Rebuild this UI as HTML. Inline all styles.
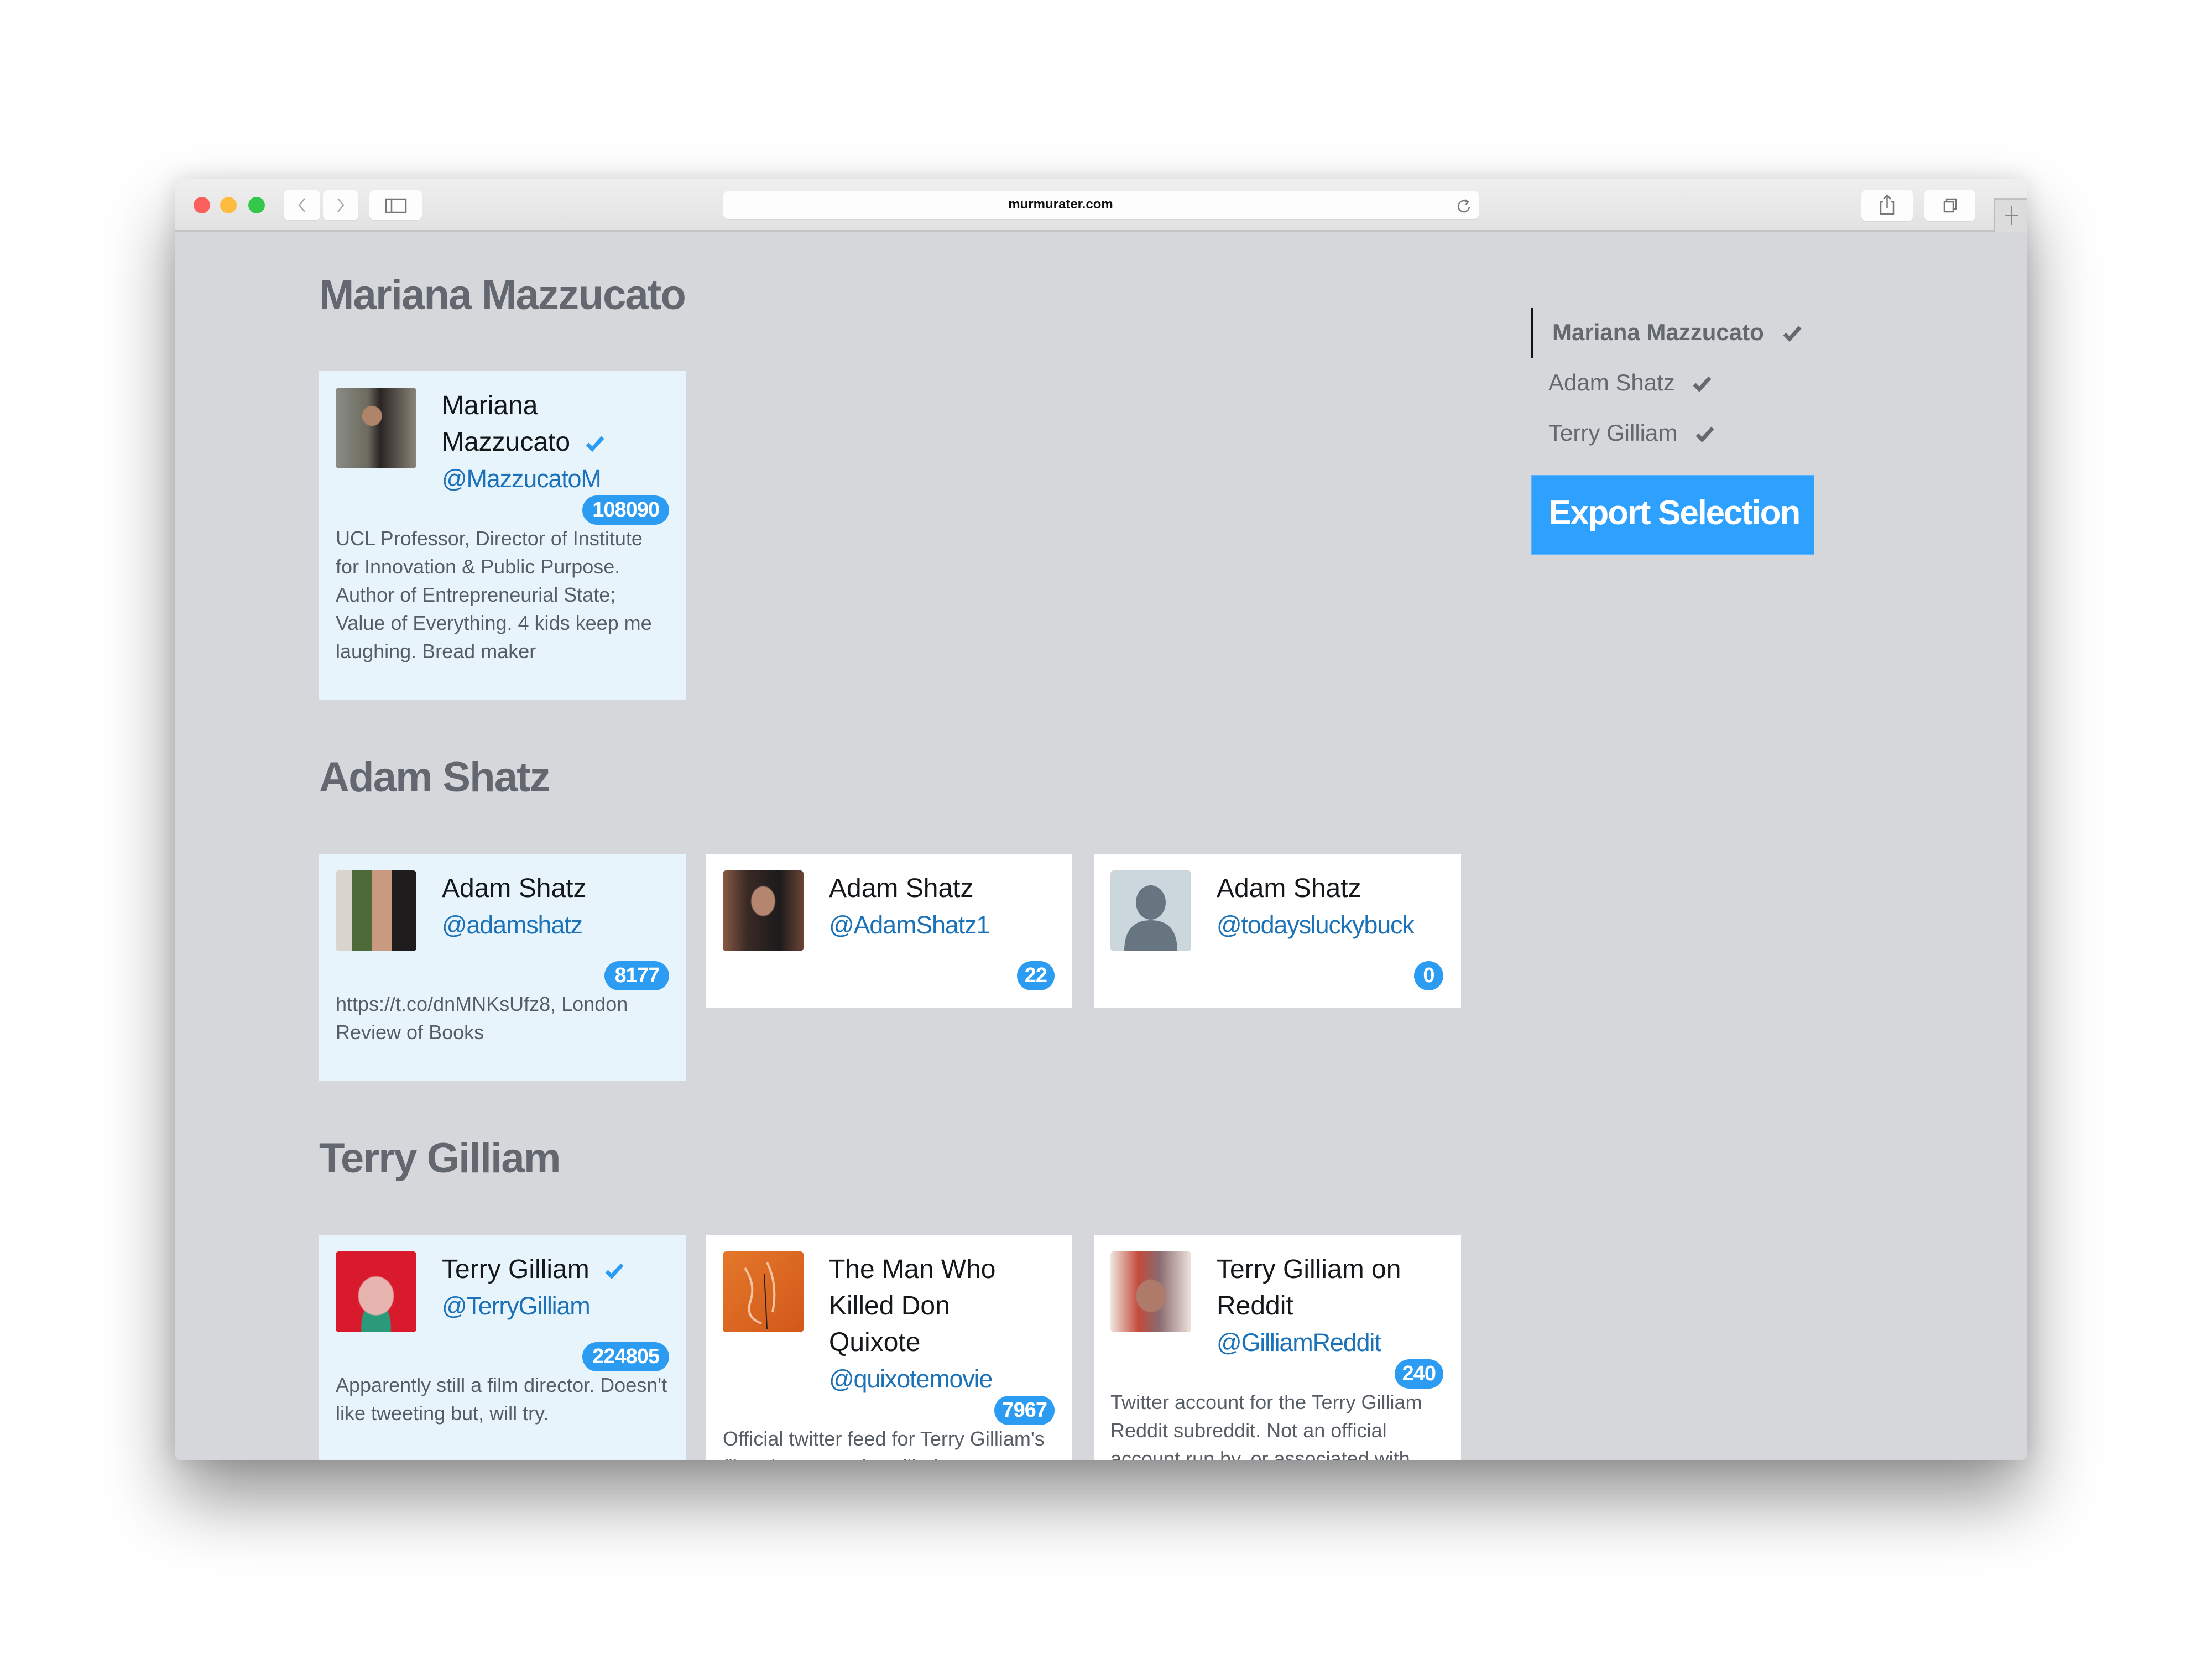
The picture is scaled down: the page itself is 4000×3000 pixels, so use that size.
<!DOCTYPE html>
<html><head><meta charset="utf-8"><style>
*{margin:0;padding:0;box-sizing:border-box}
body{width:4000px;height:3000px;background:#fff;position:relative;overflow:hidden;font-family:"Liberation Sans",Arial,sans-serif}
.win{position:absolute;left:316px;top:324px;width:3350px;height:2317px;border-radius:12px;overflow:hidden;box-shadow:0 70px 160px rgba(0,0,0,.42),0 0 40px rgba(0,0,0,.12);background:#d6d7db}
.tb{position:absolute;left:0;top:0;width:3350px;height:95px;background:linear-gradient(#efefef,#e2e2e2);border-bottom:3px solid #c4c4c4}
.dot{position:absolute;top:32px;width:30px;height:30px;border-radius:50%}
.btn{position:absolute;background:#fdfdfd;border-radius:9px;box-shadow:0 1px 1px rgba(0,0,0,.06)}
.abs{position:absolute}
h2{position:absolute;left:577px;font-size:76px;line-height:1;font-weight:bold;color:#636870;letter-spacing:-1.8px;white-space:nowrap}
.card{position:absolute;padding:30px;overflow:hidden}
.blue{background:#e8f4fc}.white{background:#fff}
.av{position:absolute;left:30px;top:30px;width:146px;height:146px;border-radius:6px;overflow:hidden}
.nm{position:absolute;left:222px;top:30px;font-size:48px;line-height:66px;color:#15181b;white-space:nowrap}
.nm .h{color:#1b72b8;font-size:45px;letter-spacing:-1.2px}
.badge{position:absolute;right:30px;height:53px;min-width:53px;padding:0 18px;border-radius:27px;background:#2b9cf2;color:#fff;font-weight:bold;font-size:38px;line-height:53px;text-align:center;letter-spacing:-1px}
.ds{position:absolute;left:30px;font-size:36px;line-height:51px;color:#575d64;white-space:nowrap}
.side{position:absolute;font-size:42px;color:#646970;white-space:nowrap;line-height:1}
</style></head><body>
<div class="win">
 <div class="tb">
  <div class="dot" style="left:34px;background:#fc605c"></div>
  <div class="dot" style="left:82px;background:#fdbc40"></div>
  <div class="dot" style="left:133px;background:#34c84a"></div>
  <div class="btn" style="left:197px;top:20px;width:66px;height:54px"><svg width="66" height="54"><path d="M38 15 L28 27 L38 39" stroke="#a8a8a8" stroke-width="2.5" fill="none"/></svg></div>
  <div class="btn" style="left:268px;top:20px;width:64px;height:54px"><svg width="64" height="54"><path d="M27 15 L37 27 L27 39" stroke="#a8a8a8" stroke-width="2.5" fill="none"/></svg></div>
  <div class="btn" style="left:352px;top:20px;width:95px;height:54px"><svg width="95" height="54"><rect x="30" y="16" width="36" height="24" stroke="#777" stroke-width="2.5" fill="none"/><line x1="40" y1="16" x2="40" y2="40" stroke="#777" stroke-width="2.5"/></svg></div>
  <div class="btn" style="left:992px;top:22px;width:1366px;height:50px;border-radius:8px">
   <div class="abs" style="left:0;width:1220px;text-align:center;top:10px;font-size:24px;font-weight:bold;color:#111">murmurater.com</div>
   <svg class="abs" style="left:1325px;top:12px" width="30" height="30"><path d="M20 7 A10 10 0 1 0 24 16" stroke="#777" stroke-width="2.5" fill="none"/><path d="M16 3 L22 7 L17 12" stroke="#777" stroke-width="2.5" fill="none"/></svg>
  </div>
  <div class="btn" style="left:3050px;top:19px;width:93px;height:57px"><svg width="93" height="57"><path d="M39 22 H35 V44 H58 V22 H54" stroke="#777" stroke-width="2.5" fill="none"/><path d="M46.5 10 V34 M40 17 L46.5 10 L53 17" stroke="#777" stroke-width="2.5" fill="none"/></svg></div>
  <div class="btn" style="left:3164px;top:19px;width:92px;height:57px"><svg width="92" height="57"><rect x="36" y="22" width="16" height="18" stroke="#777" stroke-width="2.5" fill="none"/><path d="M40 22 V17 H57 V35 H52" stroke="#777" stroke-width="2.5" fill="none"/></svg></div>
  <div class="abs" style="left:3290px;top:34px;width:60px;height:61px;background:#dcdcdc;border-left:2px solid #bbb;border-top:3px solid #c2c2c2"><svg width="60" height="61"><path d="M29 12 V46 M17 29 H41" stroke="#888" stroke-width="2"/></svg></div>
 </div>
</div>

<h2 style="top:496px">Mariana Mazzucato</h2>
<h2 style="top:1368px">Adam Shatz</h2>
<h2 style="top:2057px">Terry Gilliam</h2>

<div class="card blue" style="left:577px;top:671px;width:663px;height:594px">
 <div class="av" style="background:radial-gradient(circle at 45% 35%,#b08468 0 14%,transparent 15%),linear-gradient(90deg,#8a8c86,#6d6a5f 40%,#2a2524 55%,#8b8579)"></div>
 <div class="nm">Mariana<br>Mazzucato <svg width="36" height="30" style="margin-left:14px;vertical-align:-2px"><path d="M4 16 L13 25 L32 4" stroke="#2b9cf2" stroke-width="7" fill="none"/></svg><br><span class="h">@MazzucatoM</span></div>
 <div class="badge" style="top:225px">108090</div>
 <div class="ds" style="top:277px">UCL Professor, Director of Institute<br>for Innovation &amp; Public Purpose.<br>Author of Entrepreneurial State;<br>Value of Everything. 4 kids keep me<br>laughing. Bread maker</div>
</div>

<div class="card blue" style="left:577px;top:1544px;width:663px;height:411px">
 <div class="av" style="background:linear-gradient(90deg,#d9d4cc 0 20%,#4d6a3a 20% 45%,#c99a80 45% 70%,#1e1c1c 70%)"></div>
 <div class="nm">Adam Shatz<br><span class="h">@adamshatz</span></div>
 <div class="badge" style="top:194px">8177</div>
 <div class="ds" style="top:246px">https://t.co/dnMNKsUfz8, London<br>Review of Books</div>
</div>
<div class="card white" style="left:1277px;top:1544px;width:662px;height:278px">
 <div class="av" style="background:radial-gradient(ellipse at 50% 38%,#b48670 0 20%,transparent 22%),linear-gradient(90deg,#8a5a44,#3a2a26 30%,#1b1a1b 70%,#6c4435)"></div>
 <div class="nm">Adam Shatz<br><span class="h">@AdamShatz1</span></div>
 <div class="badge" style="top:194px;right:32px;padding:0 14px">22</div>
</div>
<div class="card white" style="left:1978px;top:1544px;width:664px;height:278px">
 <div class="av" style="background:#ccd6dd"><svg width="146" height="146"><ellipse cx="73" cy="58" rx="27" ry="31" fill="#66757f"/><path d="M25 146 Q25 90 73 90 Q121 90 121 146Z" fill="#66757f"/></svg></div>
 <div class="nm">Adam Shatz<br><span class="h">@todaysluckybuck</span></div>
 <div class="badge" style="top:194px;right:32px;padding:0">0</div>
</div>

<div class="card blue" style="left:577px;top:2233px;width:663px;height:408px">
 <div class="av" style="background:radial-gradient(ellipse at 50% 55%,#e8b4b0 0 30%,transparent 32%),radial-gradient(ellipse at 50% 95%,#2a9a7a 0 25%,transparent 27%),#d81a2c"></div>
 <div class="nm">Terry Gilliam <svg width="36" height="30" style="margin-left:14px;vertical-align:-2px"><path d="M4 16 L13 25 L32 4" stroke="#2b9cf2" stroke-width="7" fill="none"/></svg><br><span class="h">@TerryGilliam</span></div>
 <div class="badge" style="top:194px">224805</div>
 <div class="ds" style="top:246px">Apparently still a film director. Doesn't<br>like tweeting but, will try.</div>
</div>
<div class="card white" style="left:1277px;top:2233px;width:662px;height:408px">
 <div class="av" style="background:linear-gradient(135deg,#e4782a,#d2581a)"><svg width="146" height="146"><path d="M40 30 Q60 60 50 90 T70 130 M80 20 Q100 60 90 110" stroke="#f2c4a0" stroke-width="4" fill="none"/><line x1="75" y1="40" x2="80" y2="140" stroke="#222" stroke-width="2"/></svg></div>
 <div class="nm">The Man Who<br>Killed Don<br>Quixote<br><span class="h">@quixotemovie</span></div>
 <div class="badge" style="top:291px;right:32px;padding:0 14px">7967</div>
 <div class="ds" style="top:343px">Official twitter feed for Terry Gilliam's<br>film The Man Who Killed Don</div>
</div>
<div class="card white" style="left:1978px;top:2233px;width:664px;height:408px">
 <div class="av" style="background:radial-gradient(ellipse at 50% 55%,#b07a6a 0 25%,transparent 27%),linear-gradient(90deg,#f0e6e0,#c44a3a 35%,#8a6a70 60%,#efe2dc)"></div>
 <div class="nm">Terry Gilliam on<br>Reddit<br><span class="h">@GilliamReddit</span></div>
 <div class="badge" style="top:225px;right:32px;padding:0 14px">240</div>
 <div class="ds" style="top:277px">Twitter account for the Terry Gilliam<br>Reddit subreddit. Not an official<br>account run by, or associated with</div>
</div>

<div class="abs" style="left:2768px;top:557px;width:5px;height:90px;background:#111"></div>
<div class="side" style="left:2807px;top:580px;font-weight:bold">Mariana Mazzucato</div>
<svg class="abs" style="left:3222px;top:587px" width="38" height="32"><path d="M5 17 L14 26 L33 5" stroke="#646970" stroke-width="7" fill="none"/></svg>
<div class="side" style="left:2800px;top:671px">Adam Shatz</div>
<svg class="abs" style="left:3059px;top:678px" width="38" height="32"><path d="M5 17 L14 26 L33 5" stroke="#646970" stroke-width="7" fill="none"/></svg>
<div class="side" style="left:2800px;top:762px">Terry Gilliam</div>
<svg class="abs" style="left:3064px;top:769px" width="38" height="32"><path d="M5 17 L14 26 L33 5" stroke="#646970" stroke-width="7" fill="none"/></svg>
<div class="abs" style="left:2769px;top:859px;width:512px;height:144px;background:#2ea0fd;border:1px solid #5ab4ff"></div>
<div class="abs" style="left:2800px;top:897px;font-size:62px;line-height:1;font-weight:bold;color:#fff;letter-spacing:-2.2px;white-space:nowrap">Export Selection</div>
</body></html>
